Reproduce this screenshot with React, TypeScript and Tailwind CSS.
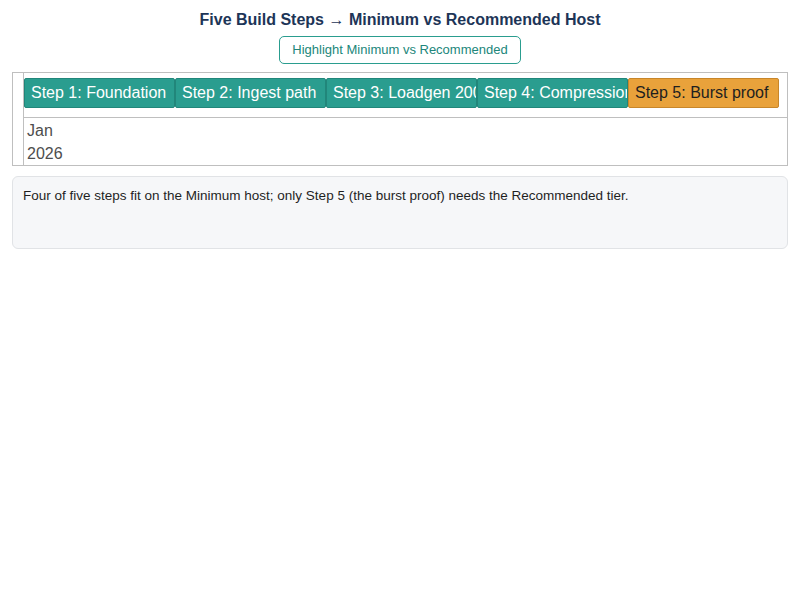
import React from 'react';

type Step = { label: string; tier: 'min' | 'rec' };

const steps: Step[] = [
  { label: 'Step 1: Foundation', tier: 'min' },
  { label: 'Step 2: Ingest path', tier: 'min' },
  { label: 'Step 3: Loadgen 2000', tier: 'min' },
  { label: 'Step 4: Compression', tier: 'min' },
  { label: 'Step 5: Burst proof', tier: 'rec' },
];

// one box on the timeline row; labels are clipped to the box width
function StepItem({ step }: { step: Step }) {
  const rec = step.tier === 'rec';
  return (
    <div
      className={`w-[151px] h-[30px] shrink-0 overflow-hidden whitespace-nowrap border rounded-[2px] px-[6px] text-[16px] leading-[28px] ${
        rec
          ? 'bg-[#e9a23b] border-[#c8862a] text-[#1f1f1f]'
          : 'bg-[#2a9d8f] border-[#21867a] text-white'
      }`}
    >
      {step.label}
    </div>
  );
}

export default function App() {
  return (
    <div className="w-[800px] h-[600px] bg-white px-[12px] pt-[10px] font-['Liberation_Sans',Arial,sans-serif]">
      <h1 className="text-center text-[16px] font-bold text-[#1d3557] leading-[20px]">
        Five Build Steps → Minimum vs Recommended Host
      </h1>

      <div className="flex justify-center mt-[6px]">
        <button className="h-[28px] w-[242px] rounded-[5px] border border-[#2a9d8f] bg-white text-[13px] text-[#21867a]">
          Highlight Minimum vs Recommended
        </button>
      </div>

      {/* timeline */}
      <div className="mt-[8px] h-[94px] border border-[#bfbfbf] flex">
        <div className="w-[11px] border-r border-[#bfbfbf]" />
        <div className="flex-1 flex flex-col">
          <div className="h-[46px] pt-[5px] border-b border-[#bfbfbf] flex">
            {steps.map((s) => (
              <StepItem key={s.label} step={s} />
            ))}
          </div>
          <div className="pl-[3px] pt-[1px] text-[16px] leading-[23px] text-[#4d4d4d]">
            <div>Jan</div>
            <div>2026</div>
          </div>
        </div>
      </div>

      <div className="mt-[10px] h-[73px] rounded-[6px] border border-[#e1e3e6] bg-[#f6f7f9] px-[10px] pt-[10px] text-[13.5px] leading-[18px] text-[#1f1f1f]">
        Four of five steps fit on the Minimum host; only Step 5 (the burst proof) needs the Recommended tier.
      </div>
    </div>
  );
}
